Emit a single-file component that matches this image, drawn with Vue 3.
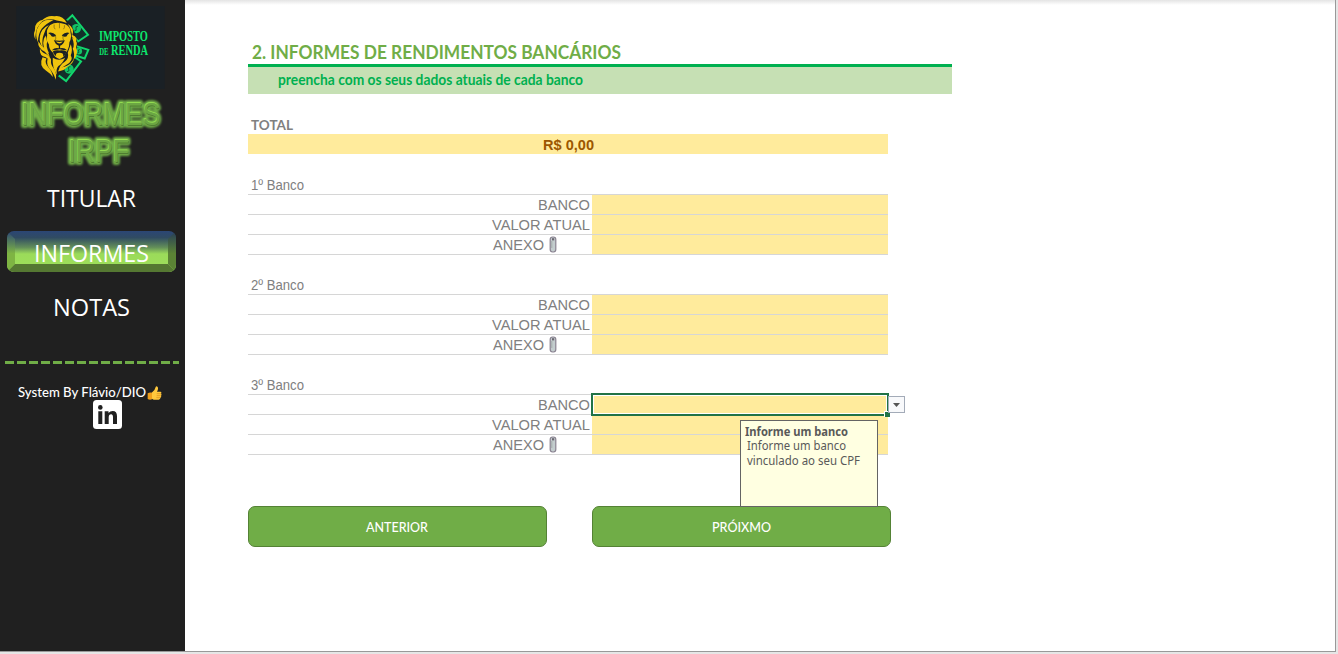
<script setup>
import { h } from 'vue'

// Single line of text fitted to a fixed advance width
const Fit = (p) =>
  h('svg', { width: p.w, height: p.ht, style: { overflow: 'visible', display: 'block', flex: 'none' } }, [
    h('text', { x: 0, y: p.y, textLength: p.w, lengthAdjust: 'spacingAndGlyphs', fill: 'currentColor' }, p.t),
  ])
Fit.props = ['w', 'ht', 'y', 't']

const banks = [
  { name: '1º Banco', active: false },
  { name: '2º Banco', active: false },
  { name: '3º Banco', active: true },
]
</script>

<template>
  <div class="app">
    <aside class="side">
      <svg class="logo" width="149" height="83" viewBox="48 17 447 250">
        <rect x="48" y="17" width="447" height="250" fill="#1a2025" />
        <g fill="#12302a" stroke="#12d66d" stroke-width="6">
          <path d="M217 45 L264 104 L234 124 L188 72Z" />
          <path d="M229 138 L265 149 L254 175 L219 164Z" />
          <path d="M170 222 L217 166 L243 184 L198 243Z" />
        </g>
        <g fill="#12c566"><circle cx="229" cy="85" r="14" /><circle cx="236" cy="153" r="10" /><circle cx="207" cy="207" r="14" /></g>
        <path fill="none" stroke="#123c2c" stroke-width="2.5" d="M234 78q-9 0-6 7t-6 8M239 148q-6 0-3 5t-4 6M211 200q-9 0-5 7t-6 8" />
        <path fill="#1a2025" d="M150 56Q190 42 214 72L224 100L232 125L229 160L215 185L190 208L168 236L135 200L115 145L108 95Z" />
        <g fill="#f0c40e">
          <!-- face and crown -->
          <path d="M150 74Q169 62 196 72Q212 80 211 95Q216 112 208 126Q207 147 197 158Q191 174 178 177Q163 172 158 157Q147 149 146 132Q136 120 141 105Q137 87 150 74Z" />
          <path d="M200 68Q187 44 163 48Q141 44 124 62Q150 53 170 61Q186 63 200 68Z" />
          <!-- left mane locks -->
          <path d="M160 59Q121 53 110 88Q105 107 113 126Q114 100 125 85Q137 70 160 59Z" />
          <path d="M133 57Q100 64 104 91Q98 104 106 119Q104 99 112 82Q119 68 133 57Z" />
          <path d="M146 74Q122 85 119 109Q116 128 128 141Q124 118 131 102Q135 85 146 74Z" />
          <path d="M136 106Q122 128 136 153L147 160Q136 140 141 125Z" />
          <path d="M114 123Q112 144 134 155L149 171Q142 148 130 141Q121 135 114 123Z" />
          <path d="M119 145Q117 169 137 171Q148 177 151 193Q158 173 139 162Q124 157 119 145Z" />
          <path d="M127 171Q115 196 137 211Q151 220 158 231Q157 215 145 202Q132 188 139 175Z" />
          <path d="M142 177Q137 198 153 211Q162 223 167 239Q171 218 160 204Q151 193 152 178Z" />
          <!-- right mane and beard -->
          <path d="M203 71Q224 82 217 104Q235 111 227 126L215 109Q217 91 203 71Z" />
          <path d="M216 113Q237 124 228 141Q237 160 221 178Q224 159 218 146Q225 134 216 113Z" />
          <path d="M212 132Q219 150 212 165Q222 181 198 195Q185 202 175 213Q178 195 194 185Q208 174 203 158Z" />
          <path d="M158 173Q175 185 195 174Q186 192 175 198Q166 208 171 225Q155 202 158 173Z" />
          <path d="M222 174Q214 195 193 200Q178 202 174 214Q192 212 202 200Q220 192 222 174Z" />
        </g>
        <g fill="#1a2025">
          <path d="M144 98Q157 94 168 105Q166 111 155 109Q151 102 144 98ZM208 98Q196 94 185 105Q187 111 199 109Q202 102 208 98Z" />
          <path d="M161 120Q178 123 194 120Q190 133 180 137L180 144Q192 141 201 150Q190 150 178 147Q166 150 155 150Q164 141 176 144L176 137Q165 132 161 120Z" />
          <path d="M158 154Q166 149 178 151Q190 149 199 154Q196 166 189 168Q191 158 178 158Q165 158 168 168Q160 164 158 154Z" />
        </g>
        <path fill="none" stroke="#6b5c16" stroke-width="2" d="M166 106Q169 114 164 122M189 106Q187 114 191 122M178 66V84M162 73Q160 82 165 87M193 75Q194 83 190 87" />
        <path fill="#f0c40e" d="M167 124Q178 127 188 124Q183 130 178 130T167 124Z" />
        <g class="brand" fill="#0ce86e">
          <text x="297" y="121" font-size="45" textLength="147" lengthAdjust="spacingAndGlyphs">IMPOSTO</text>
          <text x="298" y="164" font-size="28" textLength="28" lengthAdjust="spacingAndGlyphs">DE</text>
          <text x="333" y="164" font-size="45" textLength="112" lengthAdjust="spacingAndGlyphs">RENDA</text>
        </g>
      </svg>

      <svg class="wordart" width="185" height="86" viewBox="0 90 185 86">
        <defs>
          <filter id="soft" x="-20%" y="-20%" width="140%" height="140%"><feGaussianBlur stdDeviation="1.1" /></filter>
          <g id="words">
            <text x="21" y="125" textLength="139" lengthAdjust="spacingAndGlyphs">INFORMES</text>
            <text x="68" y="162" textLength="61" lengthAdjust="spacingAndGlyphs">IRPF</text>
          </g>
        </defs>
        <use href="#words" fill="#70ad47" stroke="#70ad47" stroke-width="6" stroke-linejoin="round" filter="url(#soft)" />
        <use href="#words" x=".8" y=".8" fill="#4f7c31" />
        <use href="#words" x="-.3" y="-.7" fill="#92dc50" />
        <use href="#words" x=".2" y=".2" fill="#6ca644" />
      </svg>

      <nav>
        <a class="item one"><Fit :w="89" :ht="24" :y="20" t="TITULAR" /></a>
        <a class="item current">
          <svg class="bevel" width="169" height="41" viewBox="0 0 169 41">
            <defs>
              <linearGradient id="sky" x1="0" y1="0" x2="0" y2="1">
                <stop offset="0" stop-color="#2b4675" /><stop offset=".16" stop-color="#304b62" />
                <stop offset=".4" stop-color="#638f59" /><stop offset=".56" stop-color="#9bdb5a" /><stop offset="1" stop-color="#9fe05a" />
              </linearGradient>
              <linearGradient id="lft" x1="0" y1="0" x2="0" y2="1"><stop offset="0" stop-color="#2b4675" /><stop offset=".55" stop-color="#7eb443" /></linearGradient>
              <linearGradient id="rgt" x1="0" y1="0" x2="0" y2="1"><stop offset="0" stop-color="#263b58" /><stop offset=".55" stop-color="#5b8335" /></linearGradient>
              <clipPath id="round"><rect width="169" height="41" rx="7" /></clipPath>
            </defs>
            <g clip-path="url(#round)">
              <rect width="169" height="41" fill="url(#sky)" />
              <path d="M0 0L8 8V33L0 41Z" fill="url(#lft)" />
              <path d="M169 0L161 8V33L169 41Z" fill="url(#rgt)" />
              <path d="M0 41L8 33H161L169 41Z" fill="#557832" />
            </g>
          </svg>
          <Fit :w="115" :ht="24" :y="21" t="INFORMES" />
        </a>
        <a class="item three"><Fit :w="77" :ht="24" :y="20" t="NOTAS" /></a>
      </nav>

      <div class="dashes"></div>

      <div class="credit">
        <Fit :w="128" :ht="16" :y="12" t="System By Flávio/DIO" />
        <svg class="thumb" width="15" height="15" viewBox="0 0 45 45">
          <path fill="#ffc83d" d="M14 20Q24 14 26 3Q28-1 32 3Q35 8 30 17H41Q45 19 42 23Q45 26 42 29Q44 33 40 35Q41 40 35 41H20L12 37Z" />
          <path fill="#ef9f1c" d="M2 22Q8 18 15 20V40Q8 43 2 39Z" />
          <path fill="none" stroke="#d88a17" stroke-width="2" d="M29 23H42M29 29H41M28 35H39" />
        </svg>
      </div>
      <svg class="linkedin" width="29" height="29" viewBox="0 0 29 29">
        <rect width="29" height="29" rx="3.5" fill="#fff" />
        <circle cx="7.3" cy="7.4" r="2.3" fill="#202020" />
        <path fill="#202020" d="M5.3 11.2H9.3V24H5.3ZM11.7 11.2H15.5V13Q17 10.9 19.7 10.9Q24 10.9 24 16.2V24H20V17.2Q20 14.3 18.1 14.3Q15.7 14.3 15.7 17.4V24H11.7Z" />
      </svg>
    </aside>

    <main class="sheet">
      <h1><Fit :w="369" :ht="22" :y="18" t="2. INFORMES DE RENDIMENTOS BANCÁRIOS" /></h1>
      <div class="hint"><Fit :w="305" :ht="18" :y="14" t="preencha com os seus dados atuais de cada banco" /></div>
      <div class="total-label"><Fit :w="42" :ht="16" :y="13" t="TOTAL" /></div>
      <div class="total"><Fit :w="51" :ht="20" :y="16" t="R$ 0,00" /></div>

      <section v-for="b in banks" :key="b.name" class="bank">
        <h2><Fit :w="53" :ht="16" :y="13" :t="b.name" /></h2>
        <div class="row">
          <div class="label"><Fit :w="52" :ht="19" :y="15" t="BANCO" /></div>
          <div class="value">
            <template v-if="b.active">
              <div class="cursor"><i></i></div>
              <div class="drop"><svg width="7" height="4"><path d="M0 0H7L3.5 4Z" fill="#555" /></svg></div>
              <div class="tip">
                <b><Fit :w="103" :ht="14" :y="11" t="Informe um banco" /></b>
                <p><Fit :w="99" :ht="15" :y="11" t="Informe um banco" /><Fit :w="113" :ht="15" :y="11" t="vinculado ao seu CPF" /></p>
              </div>
            </template>
          </div>
        </div>
        <div class="row">
          <div class="label"><Fit :w="98" :ht="19" :y="15" t="VALOR ATUAL" /></div>
          <div class="value"></div>
        </div>
        <div class="row">
          <div class="label attach">
            <Fit :w="51" :ht="19" :y="15" t="ANEXO" />
            <svg class="clip" width="8" height="17" viewBox="0 0 8 17">
              <rect x="1.2" y="1" width="5.6" height="15" rx="2.4" fill="#c3cdce" stroke="#8a8391" stroke-width="1.2" />
              <path d="M2.8 12V5" fill="none" stroke="#a3acac" />
              <path d="M3 2.2H5.2V4.4H3Z" fill="#6b6671" />
            </svg>
          </div>
          <div class="value"></div>
        </div>
      </section>

      <div class="actions">
        <button><Fit :w="62" :ht="18" :y="14" t="ANTERIOR" /></button>
        <button><Fit :w="59" :ht="18" :y="14" t="PRÓIXMO" /></button>
      </div>
    </main>
  </div>
</template>

<style>
body { overflow: hidden; background: #e6e6e6; }
</style>
<style scoped>
* { box-sizing: border-box; }
.app { display: flex; width: 1336px; height: 652px; border-right: 1px solid #999; border-bottom: 1px solid #999; background: #fff; }
.side { width: 185px; height: 651px; flex: none; background: #202020; display: flex; flex-direction: column; color: #fff; }
.logo { display: block; margin: 6px 0 0 16px; flex: none; }
.brand { font-family: "Liberation Serif", serif; font-weight: 700; }
.wordart { display: block; margin-top: 1px; flex: none; font: 32px "Liberation Sans", sans-serif; }
nav { height: 185px; font: 24px "Open Sans", sans-serif; }
.item { display: flex; justify-content: center; position: relative; width: 169px; margin-left: 7px; height: 41px; padding-top: 10px; }
.one { margin-top: 1px; }
.current { margin-top: 13px; }
.three { margin-top: 14px; }
.bevel { position: absolute; inset: 0; }
.current > :last-child { position: relative; }
.dashes { width: 174px; height: 3px; margin-left: 5px; flex: none; background: repeating-linear-gradient(90deg, #70ad47 0 9.5px, transparent 9.5px 12px); }
.credit { display: flex; margin: 21px 0 0 18px; height: 15px; font: 500 13px Lato, sans-serif; }
.thumb { margin: 1px 0 0 1px; }
.linkedin { margin-left: 93px; flex: none; }
.sheet { flex: 1; padding-left: 63px; background: linear-gradient(#e4e4e4, #fff 5px); }
h1, h2, p { margin: 0; }
h1 { height: 64px; padding: 41px 0 0 4px; color: #70ad47; font: 700 19.5px Lato, sans-serif; }
.hint { width: 704px; height: 30px; border-top: 3px solid #00b050; background: #c6e0b4; color: #00b050; padding: 4px 0 0 30px; font: 700 14.5px Lato, sans-serif; }
.total-label { height: 40px; padding: 23px 0 0 3px; color: #808080; font: 700 14px Lato, sans-serif; }
.total { width: 640px; height: 20px; background: #ffeb9c; color: #9c5700; display: flex; justify-content: center; font: 700 15px "Liberation Sans", sans-serif; }
.bank { width: 640px; height: 100px; padding-top: 1px; color: #808080; }
.bank h2 { height: 39px; padding: 22px 0 0 3px; font: 14px "Liberation Sans", sans-serif; }
.row { display: flex; height: 20px; border-top: 1px solid #d6d6d6; font: 15.5px "Liberation Sans", sans-serif; }
.row:last-child { height: 21px; border-bottom: 1px solid #d6d6d6; }
.label { width: 344px; padding-right: 2px; display: flex; justify-content: flex-end; }
.attach { padding-right: 35px; gap: 5px; }
.clip { margin-top: 1px; }
.value { width: 296px; background: #ffeb9c; position: relative; }
.cursor { position: absolute; left: -1px; top: -2px; width: 298px; height: 23px; border: 2px solid #217346; box-shadow: inset 0 0 0 1px #fff; z-index: 1; }
.cursor i { position: absolute; right: -3px; bottom: -3px; width: 6px; height: 6px; background: #217346; border: solid #fff; border-width: 1px 0 0 1px; }
.drop { position: absolute; left: 296px; top: 1px; width: 17px; height: 17px; border: 1px solid #a3abb8; background: #f8f9fb; display: flex; align-items: center; justify-content: center; z-index: 2; }
.tip { position: absolute; left: 148px; top: 25px; width: 138px; height: 87px; background: #ffffe1; border: 1px solid #646464; color: #595959; padding: 4px 0 0 4px; z-index: 2; font: 11.7px "Noto Sans", sans-serif; }
.tip p { padding-left: 2px; }
.actions { display: flex; gap: 45px; margin-top: 52px; }
button { width: 299px; height: 41px; padding: 0 1px 0 0; border: 1px solid #548235; border-radius: 7px; background: #70ad47; color: #fff; display: flex; align-items: center; justify-content: center; font: 500 13px Lato, sans-serif; }
</style>
